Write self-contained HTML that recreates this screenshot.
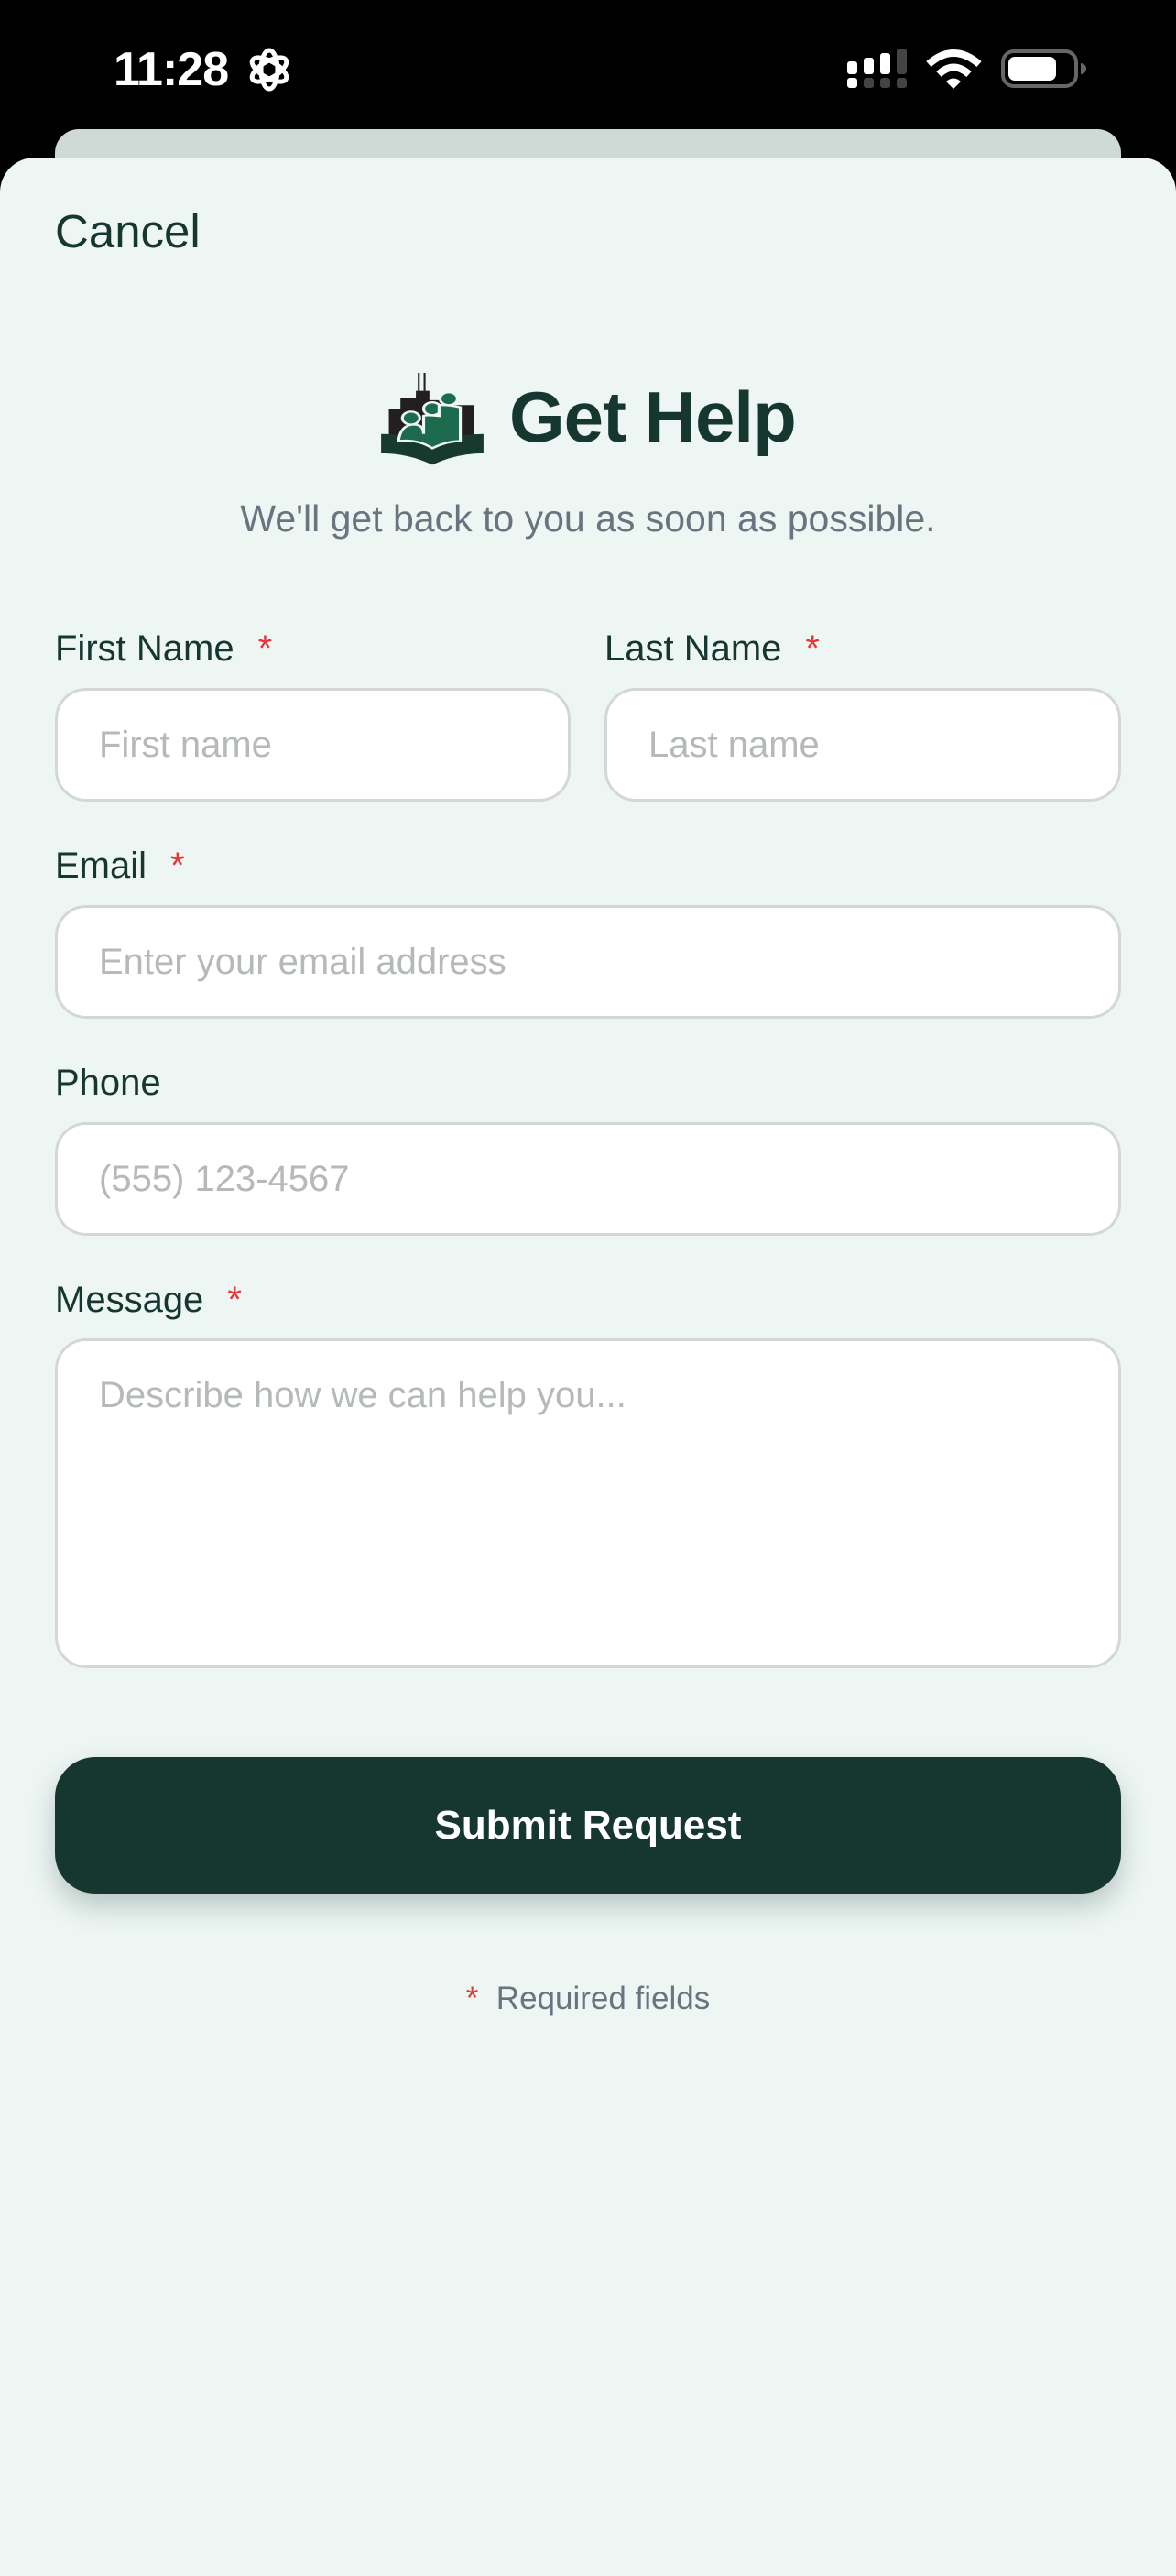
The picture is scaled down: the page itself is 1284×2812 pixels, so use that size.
<!DOCTYPE html>
<html><head><meta charset="utf-8"><style>
*{margin:0;padding:0;box-sizing:border-box}
html,body{width:1284px;height:2778px;overflow:hidden;background:#000;font-family:"Liberation Sans",sans-serif}
.abs{position:absolute}
.sheet{position:absolute;left:0;top:172px;width:1284px;height:2640px;background:#eef6f3;border-radius:38px 38px 0 0}
.back{position:absolute;left:60px;top:141px;width:1164px;height:80px;background:#cfd9d5;border-radius:26px}
.lbl{position:absolute;left:60px;font-size:40px;color:#163730;font-weight:500}
.lbl .s{color:#e5343a;margin-left:26px}
.inp{position:absolute;background:#fff;border:3px solid #d3d8d6;border-radius:34px}
.ph{position:absolute;left:45px;font-size:40px;color:#b5b9b8}
</style></head><body>
<div class="abs" style="left:124px;top:46px;font-size:52px;color:#fff;font-weight:600;letter-spacing:-1px">11:28</div>
<svg class="abs" style="left:268px;top:50px" width="52" height="52" viewBox="0 0 52 52" fill="none" stroke="#fff" stroke-width="5">
<ellipse cx="26" cy="26" rx="9" ry="21"/><ellipse cx="26" cy="26" rx="9" ry="21" transform="rotate(60 26 26)"/><ellipse cx="26" cy="26" rx="9" ry="21" transform="rotate(120 26 26)"/></svg>
<svg class="abs" style="left:920px;top:50px" width="280" height="50" viewBox="920 50 280 50">
<rect x="925" y="67" width="11" height="14" rx="3" fill="#fff"/><rect x="943" y="63" width="11" height="18" rx="3" fill="#fff"/><rect x="961" y="58" width="11" height="23" rx="3" fill="#fff"/><rect x="979" y="53" width="11" height="28" rx="3" fill="#444"/>
<rect x="925" y="85" width="11" height="11" rx="3" fill="#fff"/><rect x="943" y="85" width="11" height="11" rx="3" fill="#444"/><rect x="961" y="85" width="11" height="11" rx="3" fill="#444"/><rect x="979" y="85" width="11" height="11" rx="3" fill="#444"/>
<path d="M1014 70 Q1041 46 1069 70" stroke="#fff" stroke-width="8" fill="none"/><path d="M1025 81 Q1041 66 1058 81" stroke="#fff" stroke-width="8" fill="none"/><path d="M1033 89 L1041 97 L1049 89 Q1041 82 1033 89Z" fill="#fff"/>
<rect x="1095" y="56" width="80" height="38" rx="12" fill="none" stroke="#666" stroke-width="4"/><rect x="1101" y="62" width="52" height="26" rx="7" fill="#fff"/><path d="M1180 69 a6 6 0 0 1 0 12z" fill="#666"/>
</svg>
<div class="back"></div>
<div class="sheet"></div>
<div class="abs" style="left:60px;top:223px;font-size:51px;color:#163730">Cancel</div>
<svg class="abs" style="left:414px;top:407px" width="116" height="102" viewBox="20 0 110 130" preserveAspectRatio="none">
<rect x="60" y="0" width="2" height="25" fill="#222"/><rect x="66" y="0" width="2" height="25" fill="#222"/>
<path d="M30 100 V50 H42 V35 H58 V25 H72 V38 H95 V45 H118 V100 Z" fill="#231f20"/>
<path d="M22 85 L22 112 Q50 112 75 128 Q100 112 128 112 L128 85 Q100 85 75 100 Q50 85 22 85Z" fill="#163a2e"/>
<circle cx="53" cy="63" r="9" fill="#1d6b4f" stroke="#eef6f3" stroke-width="3"/>
<circle cx="75" cy="50" r="9" fill="#1d6b4f" stroke="#eef6f3" stroke-width="3"/>
<circle cx="92" cy="36" r="9" fill="#1d6b4f" stroke="#eef6f3" stroke-width="3"/>
<path d="M40 95 Q42 72 56 72 Q66 72 66 85 L66 60 Q70 58 82 60 L82 45 Q92 44 104 48 L104 95 Q90 95 75 105 Q60 92 40 95Z" fill="#1d6b4f" stroke="#eef6f3" stroke-width="3"/>
</svg>
<div class="abs" style="left:556px;top:410px;font-size:78px;font-weight:bold;color:#163730;letter-spacing:-1px">Get Help</div>
<div class="abs" style="left:0;width:1284px;top:543px;text-align:center;font-size:41px;color:#6b7280">We'll get back to you as soon as possible.</div>

<div class="lbl" style="top:686px">First Name<span class="s">*</span></div>
<div class="lbl" style="top:686px;left:660px">Last Name<span class="s">*</span></div>
<div class="inp" style="left:60px;top:751px;width:563px;height:124px"><div class="ph" style="top:37px">First name</div></div>
<div class="inp" style="left:660px;top:751px;width:564px;height:124px"><div class="ph" style="top:37px">Last name</div></div>

<div class="lbl" style="top:923px">Email<span class="s">*</span></div>
<div class="inp" style="left:60px;top:988px;width:1164px;height:124px"><div class="ph" style="top:37px">Enter your email address</div></div>

<div class="lbl" style="top:1160px">Phone</div>
<div class="inp" style="left:60px;top:1225px;width:1164px;height:124px"><div class="ph" style="top:37px">(555) 123-4567</div></div>

<div class="lbl" style="top:1397px">Message<span class="s">*</span></div>
<div class="inp" style="left:60px;top:1461px;width:1164px;height:360px"><div class="ph" style="top:37px">Describe how we can help you...</div></div>

<div class="abs" style="left:60px;top:1918px;width:1164px;height:149px;background:#163730;border-radius:44px;box-shadow:0 14px 30px rgba(22,55,48,0.25);color:#fff;font-size:44px;font-weight:bold;text-align:center;line-height:149px">Submit Request</div>
<div class="abs" style="left:0;width:1284px;top:2162px;text-align:center;font-size:35px;color:#6b7280"><span style="color:#e5343a">*</span>&nbsp; Required fields</div>
</body></html>
